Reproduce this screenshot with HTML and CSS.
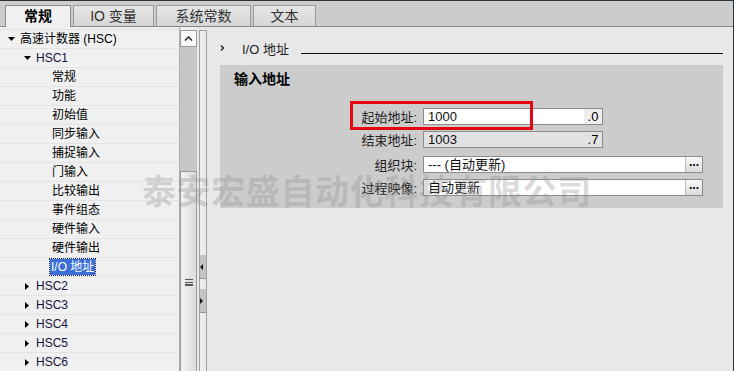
FILE: index.html
```html
<!DOCTYPE html>
<html lang="zh">
<head>
 <meta charset="UTF-8">
 <title>HSC 属性</title>
 <link rel="stylesheet" href="styles.css">
</head>
<body>

 <!-- Tab bar -->
 <div class="tabs">
 <div class="tab active">常规</div>
 <div class="tab t-io">IO 变量</div>
 <div class="tab t-sys">系统常数</div>
 <div class="tab t-txt">文本</div>
 </div>

 <div class="main">

 <!-- Navigation tree -->
 <div class="tree">
 <div class="row lv0"><svg class="tri-down" viewBox="0 0 7 4"><polygon points="0,0 7,0 3.5,4"/></svg>高速计数器 (HSC)</div>
 <div class="row lv1"><svg class="tri-down" viewBox="0 0 7 4"><polygon points="0,0 7,0 3.5,4"/></svg>HSC1</div>
 <div class="row lv2">常规</div>
 <div class="row lv2">功能</div>
 <div class="row lv2">初始值</div>
 <div class="row lv2">同步输入</div>
 <div class="row lv2">捕捉输入</div>
 <div class="row lv2">门输入</div>
 <div class="row lv2">比较输出</div>
 <div class="row lv2">事件组态</div>
 <div class="row lv2">硬件输入</div>
 <div class="row lv2">硬件输出</div>
 <div class="row lv2"><span class="selected">I/O 地址</span></div>
 <div class="row lv1"><svg class="tri-right" viewBox="0 0 4 7"><polygon points="0,0 4,3.5 0,7"/></svg>HSC2</div>
 <div class="row lv1"><svg class="tri-right" viewBox="0 0 4 7"><polygon points="0,0 4,3.5 0,7"/></svg>HSC3</div>
 <div class="row lv1"><svg class="tri-right" viewBox="0 0 4 7"><polygon points="0,0 4,3.5 0,7"/></svg>HSC4</div>
 <div class="row lv1"><svg class="tri-right" viewBox="0 0 4 7"><polygon points="0,0 4,3.5 0,7"/></svg>HSC5</div>
 <div class="row lv1"><svg class="tri-right" viewBox="0 0 4 7"><polygon points="0,0 4,3.5 0,7"/></svg>HSC6</div>
 </div>

 <!-- Vertical scrollbar -->
 <div class="vscroll">
 <div class="sb-up"><svg viewBox="0 0 9 5"><polyline points="1,4.5 4.5,1 8,4.5"/></svg></div>
 <div class="sb-track"></div>
 <div class="sb-thumb"><span class="grip"></span></div>
 </div>

 <!-- Splitter -->
 <div class="splitter">
 <div class="sp-btn"><svg viewBox="0 0 3 6"><polygon points="3,0 0,3 3,6"/></svg></div>
 <div class="sp-btn"><svg viewBox="0 0 3 6"><polygon points="0,0 3,3 0,6"/></svg></div>
 </div>

 <!-- Properties -->
 <div class="content">
 <div class="sec-head">
 <svg class="chev" viewBox="0 0 5 6"><polyline points="1,0.5 3.5,3 1,5.5"/></svg>
 <span class="sec-title">I/O 地址</span>
 <span class="sec-line"></span>
 </div>

 <div class="group">
 <div class="group-title">输入地址</div>

 <div class="field">
 <label>起始地址:</label>
 <div class="box short"><span class="val">1000</span><span class="bit">.0</span></div>
 </div>
 <div class="field f2">
 <label>结束地址:</label>
 <div class="box short readonly"><span class="val">1003</span><span class="bit">.7</span></div>
 </div>
 <div class="field f3">
 <label>组织块:</label>
 <div class="box long"><span class="val">--- (自动更新)</span><span class="dots">...</span></div>
 </div>
 <div class="field f4">
 <label>过程映像:</label>
 <div class="box long"><span class="val">自动更新</span><span class="dots">...</span></div>
 </div>

 <div class="mark"></div>
 </div>
 </div>
 </div>

 <div class="watermark">泰安宏盛自动化科技有限公司</div>

</body>
</html>
```

FILE: styles.css
```css
/* General */
body {
margin: 0;
width: 734px;
height: 371px;
overflow: hidden;
position: relative;
font-family: "Liberation Sans", "Noto Sans CJK SC", sans-serif;
font-size: 12px;
color: #000;
background: #e8e8e8;
border-right: 1px solid #2b3040;
box-sizing: border-box;
}

/* Tab bar */
.tabs {
height: 25px;
border-top: 1px solid #2b3040;
border-bottom: 1px solid #8a8a8a;
background: #cccccc;
display: flex;
align-items: flex-end;
padding-left: 5px;
gap: 2px;
}

.tab {
height: 21px;
box-sizing: border-box;
border: 1px solid #9a9a9a;
border-bottom: none;
background: linear-gradient(#e6e6e6, #d6d6d6);
color: #333;
font-size: 14px;
line-height: 20px;
text-align: center;
}

.tab.active {
width: 66px;
height: 22px;
margin-bottom: -1px;
background: #f0f0f0;
border-color: #8a8a8a;
color: #000;
font-weight: bold;
}

.t-io { width: 81px; }
.t-sys { width: 95px; }
.t-txt { width: 63px; }

.main {
display: flex;
height: 345px;
}

/* Tree */
.tree {
width: 179px;
background: #f0f0f0;
border-right: 1px solid #b0b0b0;
padding-top: 2px;
}

.row {
height: 19px;
box-sizing: border-box;
border-top: 1px solid #e3e3e3;
line-height: 18px;
white-space: nowrap;
display: flex;
align-items: center;
}

.lv0 { padding-left: 8px; }
.lv1 { padding-left: 24px; color: #14143c; }
.lv2 { padding-left: 52px; }

.tri-down {
width: 7px;
height: 4px;
margin-right: 5px;
}

.tri-right {
width: 4px;
height: 7px;
margin: 0 7px 0 1px;
}

.selected {
margin-left: -2px;
padding: 0 1px;
line-height: 16px;
background: #3b6fd6;
color: #fff;
outline: 1px dotted #1a2a60;
}

/* Scrollbar */
.vscroll {
width: 17px;
display: flex;
flex-direction: column;
padding-top: 3px;
background: #f0f0f0;
}

.sb-up {
height: 17px;
box-sizing: border-box;
border: 1px solid #9a9a9a;
background: #fafafa;
display: flex;
align-items: center;
justify-content: center;
}

.sb-up svg {
width: 9px;
height: 5px;
fill: none;
stroke: #333;
stroke-width: 1.6;
}

.sb-track {
height: 124px;
background: #c6c6c6;
}

.sb-thumb {
flex: 1;
border: 1px solid #9a9a9a;
border-bottom: none;
background: linear-gradient(90deg, #f2f2f2, #dcdcdc);
display: flex;
justify-content: center;
padding-top: 107px;
}

.grip {
width: 8px;
height: 7px;
border-top: 1px solid #555;
border-bottom: 1px solid #555;
background: linear-gradient(#fff0 2px, #555 2px, #555 3px, #fff0 3px, #fff0 4px, #555 4px, #555 5px, #fff0 5px);
box-sizing: border-box;
}

/* Splitter */
.splitter {
width: 6px;
margin: 3px 1px 0 2px;
border: 1px solid #a0a0a0;
border-bottom: none;
background: #ececec;
display: flex;
flex-direction: column;
padding-top: 224px;
gap: 10px;
}

.sp-btn {
height: 23px;
background: #c4c4c4;
border-bottom: 1px solid #999;
display: flex;
align-items: center;
}

.sp-btn svg {
width: 3px;
height: 6px;
fill: #111;
}

/* Properties */
.content {
flex: 1;
padding: 12px 10px 0 12px;
}

.sec-head {
display: flex;
align-items: center;
height: 18px;
}

.chev {
width: 5px;
height: 6px;
fill: none;
stroke: #222;
stroke-width: 1.4;
}

.sec-title {
margin-left: 17px;
font-size: 13px;
color: #222;
}

.sec-line {
flex: 1;
margin: 10px 0 0 12px;
border-top: 1px solid #111;
}

.group {
position: relative;
margin-top: 8px;
height: 143px;
background: #cccccc;
}

.group-title {
padding: 5px 0 0 14px;
font-size: 14px;
font-weight: bold;
line-height: 18px;
}

.field {
display: flex;
align-items: center;
height: 17px;
margin: 20px 0 0 135px;
}

.f2 { margin-top: 6px; }
.f3 { margin-top: 8px; }
.f4 { margin-top: 6px; }

.field label {
width: 62px;
text-align: right;
color: #222;
font-size: 13px;
}

.box {
margin-left: 6px;
height: 17px;
box-sizing: border-box;
border: 1px solid #8c8c8c;
background: #fff;
display: flex;
font-size: 13px;
line-height: 15px;
}

.short { width: 180px; }
.long { width: 280px; }

.readonly { background: #e2e2e2; }

.val {
flex: 1;
padding-left: 4px;
color: #111;
}

.bit {
width: 18px;
text-align: center;
background: #eeeeee;
}

.readonly .bit { background: #e2e2e2; }

.dots {
width: 16px;
text-align: center;
background: linear-gradient(#fafafa, #dcdcdc);
border-left: 1px solid #bbb;
font-size: 12px;
font-weight: bold;
line-height: 11px;
}

/* Red highlight over the start address */
.mark {
position: absolute;
left: 130px;
top: 36px;
width: 177px;
height: 23px;
border: 3px solid #e30613;
}

/* Watermark over the page */
.watermark {
position: absolute;
left: 142px;
top: 165px;
font-family: "Noto Sans CJK SC", sans-serif;
font-size: 34px;
font-weight: bold;
letter-spacing: 0.6px;
color: rgba(140, 140, 140, 0.32);
white-space: nowrap;
pointer-events: none;
}
```
